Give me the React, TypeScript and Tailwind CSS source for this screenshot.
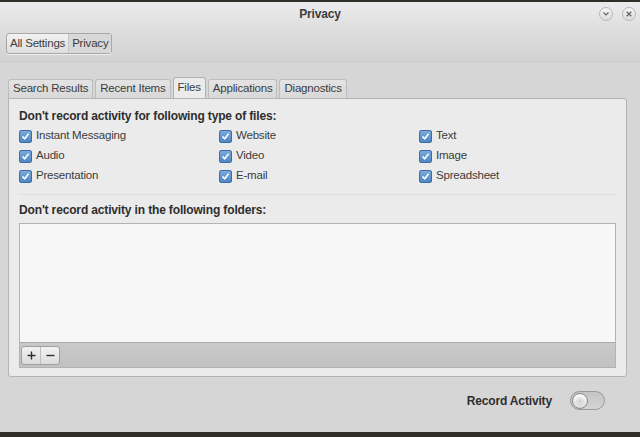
import { useState } from 'react';

const font = { fontFamily: '"Liberation Sans", Arial, sans-serif' };

function Check({ label }: { label: string }) {
  return (
    <div className="flex items-center h-5 gap-[4px]">
      <span className="w-[13px] h-[13px] rounded-[2px] border border-[#3d6ea5] bg-gradient-to-b from-[#7aa9dc] to-[#4f87c4] flex items-center justify-center">
        <svg width="9" height="9" viewBox="0 0 9 9">
          <path d="M1.5 4.5 L3.7 6.8 L7.6 1.8" stroke="#fff" strokeWidth="1.6" fill="none" />
        </svg>
      </span>
      <span className="text-[11.5px] tracking-[-0.2px] text-[#3c3c3c]">{label}</span>
    </div>
  );
}

export default function App() {
  const [tab, setTab] = useState('Files');
  const tabs = ['Search Results', 'Recent Items', 'Files', 'Applications', 'Diagnostics'];
  const cols = [
    ['Instant Messaging', 'Audio', 'Presentation'],
    ['Website', 'Video', 'E-mail'],
    ['Text', 'Image', 'Spreadsheet'],
  ];

  return (
    <div style={font} className="w-[640px] h-[437px] bg-[#2e2d27] pt-[2px] overflow-hidden">
      <div className="h-[430px] flex flex-col bg-[#d6d6d6]">
        {/* title bar */}
        <div className="h-[24px] relative flex items-center justify-center bg-gradient-to-b from-[#ececec] to-[#e0e0e0]">
          <span className="text-[12px] tracking-[-0.15px] font-bold text-[#3c3c3c]">Privacy</span>
          <div className="absolute right-[4px] top-[5px] flex gap-[9px]">
            <span className="w-[14px] h-[14px] rounded-full border border-[#b8b8b8] bg-gradient-to-b from-[#f4f4f4] to-[#dcdcdc] flex items-center justify-center">
              <svg width="6" height="4" viewBox="0 0 6 4"><path d="M0.5 0.5 L3 3 L5.5 0.5" stroke="#666" strokeWidth="1.2" fill="none" /></svg>
            </span>
            <span className="w-[14px] h-[14px] rounded-full border border-[#b8b8b8] bg-gradient-to-b from-[#f4f4f4] to-[#dcdcdc] flex items-center justify-center">
              <svg width="6" height="6" viewBox="0 0 6 6"><path d="M0.7 0.7 L5.3 5.3 M5.3 0.7 L0.7 5.3" stroke="#666" strokeWidth="1.3" /></svg>
            </span>
          </div>
        </div>
        {/* toolbar */}
        <div className="h-[36px] flex items-center px-[6px] bg-gradient-to-b from-[#e0e0e0] to-[#d2d2d2] border-b border-[#cbcbcb]">
          <div className="flex h-[21px] rounded-[3px] border border-[#a8a8a8] bg-gradient-to-b from-[#f2f2f2] to-[#dedede] shadow-[0_1px_0_#eee]">
            <span className="px-[3px] flex items-center text-[11.5px] tracking-[-0.2px] text-[#3c3c3c] border-r border-[#c6c6c6]">All Settings</span>
            <span className="px-[3px] flex items-center text-[11.5px] tracking-[-0.2px] text-[#3c3c3c] bg-[#d8d8d8]">Privacy</span>
          </div>
        </div>

        {/* content */}
        <div className="flex-1 px-[8px] pt-[15px] pr-[13px] flex flex-col">
          <div className="flex items-end gap-[2px] h-[21px]">
            {tabs.map(t => (
              <button
                key={t}
                onClick={() => setTab(t)}
                className={`px-[4px] rounded-t-[3px] border border-b-0 text-[11.5px] tracking-[-0.2px] text-[#3c3c3c] flex items-center ${
                  tab === t
                    ? 'h-[21px] bg-[#ebebeb] border-[#b0b0b0]'
                    : 'h-[19px] bg-gradient-to-b from-[#e4e4e4] to-[#d8d8d8] border-[#bdbdbd]'
                }`}
              >
                {t}
              </button>
            ))}
          </div>
          <div className="h-[279px] bg-[#ebebeb] border border-[#b3b3b3] rounded-b-[3px] rounded-tr-[3px] px-[10px] pt-[8px] flex flex-col">
            <div className="text-[12px] tracking-[-0.15px] font-bold text-[#2e2e2e] h-[18px] flex items-center">
              Don't record activity for following type of files:
            </div>
            <div className="grid grid-cols-[200px_200px_1fr] pt-[1px]">
              {cols.map((c, i) => (
                <div key={i} className="flex flex-col">
                  {c.map(l => <Check key={l} label={l} />)}
                </div>
              ))}
            </div>
            <div className="mt-[8px] border-t border-[#e0e0e0]" />
            <div className="mt-[6px] text-[12px] tracking-[-0.15px] font-bold text-[#2e2e2e] h-[18px] flex items-center">
              Don't record activity in the following folders:
            </div>
            <div className="mt-[4px] border border-[#b3b3b3] flex flex-col h-[145px]">
              <div className="flex-1 bg-[#f7f7f7]" />
              <div className="h-[25px] border-t border-[#a9a9a9] bg-gradient-to-b from-[#c9c9c9] to-[#c1c1c1] flex items-center px-[1px]">
                <div className="flex h-[19px] rounded-[3px] border border-[#9e9e9e] bg-gradient-to-b from-[#f2f2f2] to-[#dcdcdc]">
                  <span className="w-[19px] flex items-center justify-center border-r border-[#bdbdbd]">
                    <svg width="9" height="9" viewBox="0 0 9 9"><path d="M4.5 0.5 V8.5 M0.5 4.5 H8.5" stroke="#2e2e2e" strokeWidth="1.4" /></svg>
                  </span>
                  <span className="w-[18px] flex items-center justify-center">
                    <svg width="9" height="9" viewBox="0 0 9 9"><path d="M0.5 4.5 H8.5" stroke="#2e2e2e" strokeWidth="1.4" /></svg>
                  </span>
                </div>
              </div>
            </div>
          </div>

          <div className="flex items-center justify-end mt-[14px] pr-[22px] gap-[18px]">
            <span className="text-[12px] tracking-[-0.15px] font-bold text-[#2e2e2e]">Record Activity</span>
            <span className="w-[35px] h-[19px] rounded-full border border-[#9a9a9a] bg-gradient-to-b from-[#c4c4c4] to-[#d4d4d4] flex items-center pl-[1px]">
              <span className="w-[16px] h-[16px] rounded-full border border-[#8c8c8c] bg-gradient-to-b from-[#fafafa] to-[#dadada] flex items-center justify-center">
                <svg width="10" height="10" viewBox="0 0 10 10">
                  <path d="M5 1 V9 M1 5 H9 M2.2 2.2 L7.8 7.8 M7.8 2.2 L2.2 7.8" stroke="#cfcfcf" strokeWidth="0.8" />
                </svg>
              </span>
            </span>
          </div>
        </div>
      </div>
    </div>
  );
}
